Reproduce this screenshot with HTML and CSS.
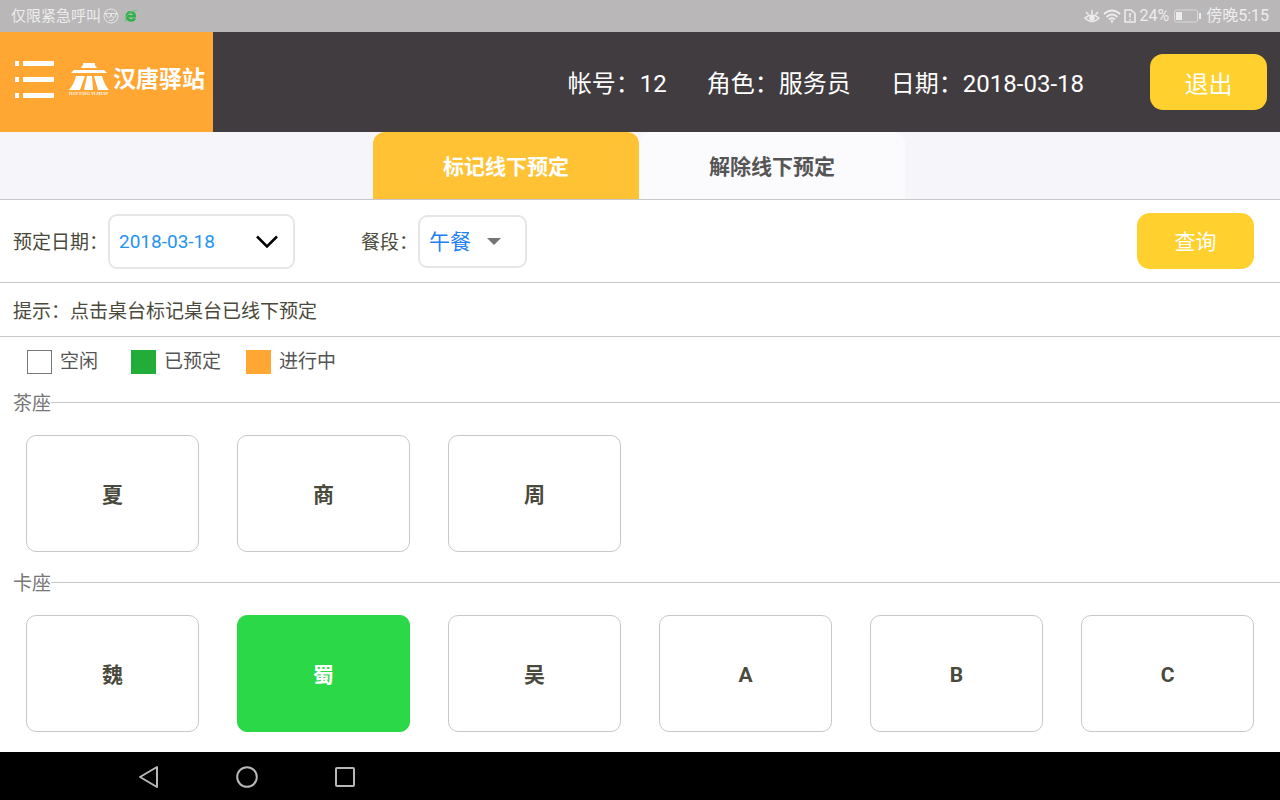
FILE: index.html
```html
<!DOCTYPE html>
<html lang="zh-CN">
<head>
<meta charset="utf-8">
<meta name="viewport" content="width=device-width, initial-scale=1">
<title>汉唐驿站</title>
<link rel="stylesheet" href="styles.css">
</head>
<body>
<div class="statusbar">
  <div class="status-side">
    <span class="carrier">仅限紧急呼叫</span>
    <svg width="16" height="16" viewBox="0 0 16 16" fill="none" stroke="#e9e8e8"><circle cx="8" cy="8" r="7"/><path d="M1.500 5.500h13M3 6q0 3.500 2.500 3.500T8 6q0 3.500 2.500 3.500T13 6M6 12.500q3 0 5-1.500"/></svg>
    <svg class="browser-icon" width="14" height="14" viewBox="0 0 14 14" fill="none"><path d="M3.300 7.200h7.500C10.800 1.800 2.800 1.800 2.800 7.200c0 5.200 6.600 5.200 8 2" stroke="#2fb048" stroke-width="2.500"/><path d="M2 13C-1.500 11 7 0 13 1.300" stroke="#6cc97b"/></svg>
  </div>
  <div class="status-side status-right">
    <svg width="16" height="14" viewBox="0 0 16 14" fill="none" stroke="#ededed" stroke-width="1.500"><path d="M1 9Q8 3 15 9Q8 16 1 9ZM2 3l2.500 2.500M8 1v4M14 3l-2.500 2.500"/><circle cx="8" cy="9" r="2" fill="#ededed"/></svg>
    <svg width="18" height="14" viewBox="0 0 18 14" fill="none" stroke="#ededed" stroke-width="1.700"><path d="M1 5Q9-2 17 5M3.500 8Q9 3 14.500 8M6 10.500Q9 8 12 10.500"/><circle cx="9" cy="12.500" r="1.300" fill="#ededed" stroke="none"/></svg>
    <svg width="12" height="14" viewBox="0 0 12 14" fill="none" stroke="#ededed" stroke-width="1.600"><path d="M1 1h6l4 3.500V13H1ZM6 4v4.500M6 10v1.500"/></svg>
    <span class="battery-level">24%</span>
    <svg class="battery" width="27" height="14" viewBox="0 0 27 14" fill="none"><rect x=".5" y="1" width="23" height="12" rx="2" stroke="#dadada"/><path d="M2 3h6v8H2zM25 4h2v6h-2z" fill="#ededed"/></svg>
    <span class="clock">傍晚5:15</span>
  </div>
</div>

<header class="header">
  <div class="brand">
    <button class="menu" type="button" aria-label="菜单"><svg width="40" height="40" viewBox="0 0 40 40" fill="#fff"><path d="M1 1h4v5H1zM9 1h31v5H9zM1 17h4v5H1zM9 17h31v5H9zM1 33h4v5H1zM9 33h31v5H9z"/></svg></button>
    <div class="emblem">
      <svg width="40" height="28" viewBox="0 0 40 28" fill="#fff"><path d="M14 0h12v2l2 3H12l2-3zM5 7h30l3 3H2zM7 13h9L11 27H0q5-6 7-14zM18 13h5l1 14H15zM25 13h8q2 8 7 14H29z"/></svg>
      <span class="emblem-text">HAN TANG YI ZHAN</span>
    </div>
    <span class="wordmark">汉唐驿站</span>
  </div>
  <div class="session">
    <span>帐号：12</span>
    <span>角色：服务员</span>
    <span>日期：2018-03-18</span>
  </div>
  <button class="btn btn-exit" type="button">退出</button>
</header>

<nav class="tabs">
  <button class="tab tab-active" type="button">标记线下预定</button>
  <button class="tab" type="button">解除线下预定</button>
</nav>

<main class="main">
  <form class="filters">
    <label for="date">预定日期：</label>
    <div class="field field-date">
      <select id="date"><option>2018-03-18</option></select>
      <svg class="chevron" width="22" height="14" viewBox="0 0 22 14" fill="none" stroke="#000" stroke-width="2.500"><path d="M1 1.500l10 10 10-10"/></svg>
    </div>
    <label for="meal">餐段：</label>
    <div class="field field-meal">
      <select id="meal"><option>午餐</option></select>
      <svg class="caret" width="14" height="7" viewBox="0 0 14 7"><path d="M0 0h14L7 7z" fill="#757575"/></svg>
    </div>
    <button class="btn btn-query" type="button">查询</button>
  </form>
  <p class="hint">提示：点击桌台标记桌台已线下预定</p>
  <ul class="legend">
    <li><span class="swatch swatch-free"></span>空闲</li>
    <li><span class="swatch swatch-booked"></span>已预定</li>
    <li><span class="swatch swatch-active"></span>进行中</li>
  </ul>
  <section>
    <h2 class="area">茶座</h2>
    <div class="tables">
      <button class="seat" type="button">夏</button>
      <button class="seat" type="button">商</button>
      <button class="seat" type="button">周</button>
    </div>
  </section>
  <section>
    <h2 class="area">卡座</h2>
    <div class="tables">
      <button class="seat" type="button">魏</button>
      <button class="seat seat-booked" type="button">蜀</button>
      <button class="seat" type="button">吴</button>
      <button class="seat" type="button">A</button>
      <button class="seat" type="button">B</button>
      <button class="seat" type="button">C</button>
    </div>
  </section>
</main>

<footer class="navbar">
  <button type="button" aria-label="返回"><svg width="24" height="24" viewBox="0 0 24 24"><path d="M3 12L20 2v20z"/></svg></button>
  <button type="button" aria-label="主页"><svg width="24" height="24" viewBox="0 0 24 24"><circle cx="12" cy="12" r="9.800"/></svg></button>
  <button type="button" aria-label="最近任务"><svg width="24" height="24" viewBox="0 0 24 24"><rect x="3" y="3" width="18" height="18" rx="1"/></svg></button>
</footer>
</body>
</html>
```
FILE: styles.css
```css
* { box-sizing: border-box; }
body {
  margin: 0;
  min-height: 100vh;
  display: flex;
  flex-direction: column;
  background: #fdfdfd;
  color: #4a4a3c;
  font: 19px/28px Roboto, "Noto Sans CJK SC", sans-serif;
}
button, select { font: inherit; color: inherit; border: 0; background: none; padding: 0; margin: 0; }
svg { display: block; flex: none; }

.statusbar {
  height: 32px;
  padding: 0 11px;
  display: flex;
  justify-content: space-between;
  align-items: center;
  background: #b9b7b8;
  color: #ededed;
  font-size: 15px;
  line-height: 20px;
}
.status-side { display: flex; align-items: center; gap: 2px; }
.browser-icon { margin-left: 3px; }
.status-right { gap: 3px; font-size: 16px; }
.battery { margin: 0 2px; }

.header { display: flex; align-items: center; background: #413c3f; padding-right: 13px; }
.brand {
  height: 100px;
  width: 213px;
  padding: 0 0 4px 14px;
  display: flex;
  align-items: center;
  background: #ffa633;
  color: #fff;
}
.menu { margin-right: 15px; }
.emblem { width: 40px; margin-right: 4px; }
.emblem-text { display: block; font: bold 4px/6px "Liberation Serif", serif; white-space: nowrap; }
.wordmark { font-size: 23px; font-weight: 700; line-height: 32px; white-space: nowrap; }
.session {
  margin-left: auto;
  padding-top: 4px;
  display: flex;
  gap: 40px;
  color: #fff;
  font-size: 24px;
  line-height: 32px;
}
.btn { width: 117px; height: 56px; padding-top: 2px; border-radius: 13px; background: #ffd02e; color: #fff; }
.btn-exit { margin-left: 66px; padding-top: 6px; font-size: 24px; }

.tabs {
  display: flex;
  justify-content: center;
  padding-right: 2px;
  background: #f5f5fa;
  border-bottom: 1px solid #c8c8c8;
}
.tab {
  width: 266px;
  height: 67px;
  padding-top: 2px;
  border-radius: 12px 12px 0 0;
  background: #fbfbfd;
  color: #555;
  font-size: 21px;
  font-weight: 700;
}
.tab-active { background: #ffc234; color: #fff; }

.main { flex: 1; background: #fff; }
.filters {
  height: 83px;
  padding: 0 26px 0 13px;
  display: flex;
  align-items: center;
  border-bottom: 1px solid #c8c8c8;
}
.filters label { padding-top: 4px; }
.field { position: relative; border: 2px solid #e6e6e6; border-radius: 9px; color: #2494f2; }
.field select { appearance: none; width: 100%; height: 100%; padding: 2px 9px 0; outline: 0; }
.field svg { position: absolute; pointer-events: none; }
.field-date { width: 187px; height: 55px; margin-right: 66px; }
.field-meal { width: 109px; height: 53px; font-size: 21px; color: #1e80f0; }
.chevron { right: 15px; top: 19px; }
.caret { right: 24px; top: 21px; }
.btn-query { margin-left: auto; font-size: 21px; }
.hint { margin: 0; padding: 15px 13px 10px; height: 54px; border-bottom: 1px solid #c8c8c8; }

.legend {
  margin: 0;
  padding: 11px 27px 7px;
  display: flex;
  gap: 25px;
  list-style: none;
  color: #555;
}
.legend li { display: flex; align-items: center; gap: 8px; }
.legend li:first-child { margin-right: 8px; }
.swatch { width: 25px; height: 24px; }
.swatch-free { border: 1px solid #777; }
.swatch-booked { background: #22ac38; }
.swatch-active { background: #ffa633; }

.area {
  margin: 0;
  padding-left: 13px;
  display: flex;
  align-items: center;
  color: #777;
  font-size: 19px;
  font-weight: 400;
  line-height: 42px;
}
.area::after { content: ""; flex: 1; margin-bottom: 3px; border-top: 1px solid #c8c8c8; }
.tables {
  padding: 10px 26px 11px;
  display: grid;
  grid-template-columns: repeat(6, 1fr);
  gap: 38px;
}
.seat {
  height: 117px;
  padding-top: 2px;
  border: 1px solid #c8c8c8;
  border-radius: 10px;
  color: #4a4a3c;
  font-size: 21px;
  font-weight: 700;
}
.seat-booked { border-color: #2bd848; background: #2bd848; color: #fff; }

.navbar { height: 48px; padding: 1px 0 0 137px; display: flex; align-items: center; gap: 74px; background: #000; }
.navbar svg { fill: none; stroke: #b8b8b8; stroke-width: 2; stroke-linejoin: round; }
```
